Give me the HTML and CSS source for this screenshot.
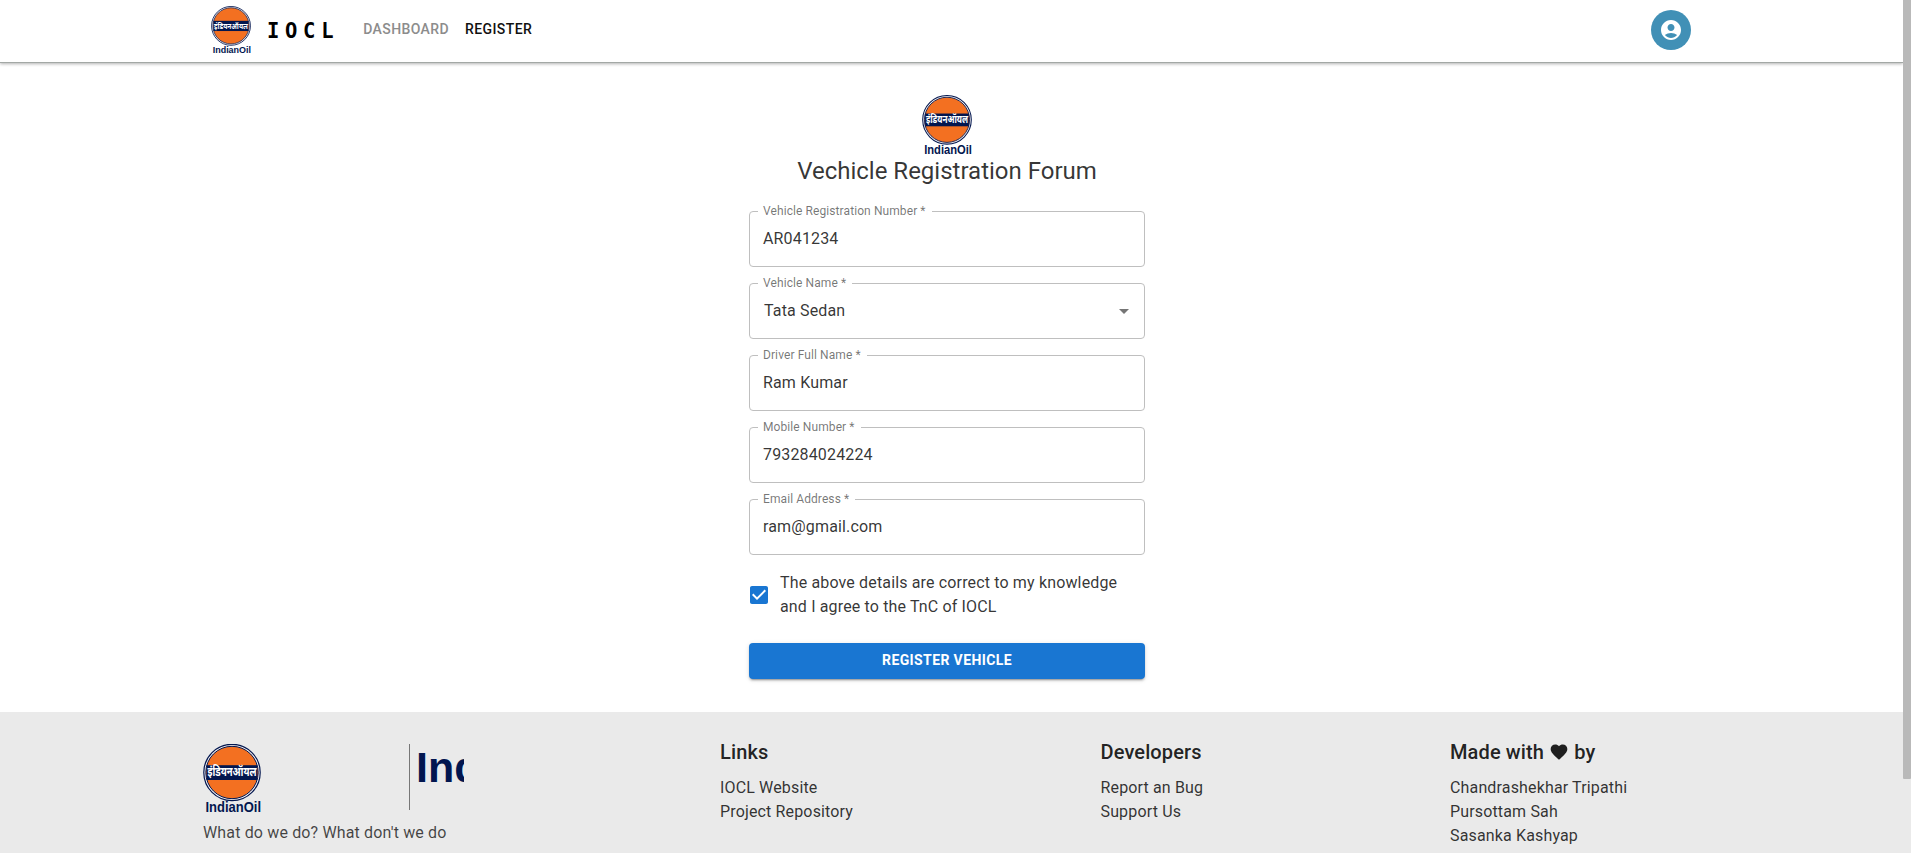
FILE: index.html
```html
<!DOCTYPE html>
<html lang="en">
<head>
<meta charset="utf-8">
<title>IOCL - Register</title>
<link rel="stylesheet" href="styles.css">
</head>
<body>
<svg class="defs" aria-hidden="true">
  <symbol id="emblem" viewBox="0 0 58 69">
    <circle cx="29" cy="28.5" r="28.2" fill="#f3f1f2" stroke="#02164f" stroke-width="1.2"/>
    <circle cx="29" cy="28.5" r="26.2" fill="#f37021" stroke="#02164f" stroke-width="1"/>
    <rect x="3.6" y="21.2" width="50.8" height="14.8" fill="#02164f"/>
    <text class="emblem-hindi" x="29" y="32.4" text-anchor="middle" textLength="49" lengthAdjust="spacingAndGlyphs">इंडियनऑयल</text>
    <text class="emblem-name" x="2.5" y="68" textLength="55.5" lengthAdjust="spacingAndGlyphs">IndianOil</text>
  </symbol>
</svg>

<header class="appbar">
  <div class="toolbar">
    <svg class="logo logo-small"><use href="#emblem"/></svg>
    <span class="brand">IOCL</span>
    <nav class="nav">
      <a class="nav-link muted">DASHBOARD</a>
      <a class="nav-link">REGISTER</a>
    </nav>
    <div class="avatar">
      <svg width="24" height="24" viewBox="0 0 24 24"><path fill="#fff" d="M12 2C6.48 2 2 6.48 2 12s4.480 10 10 10 10-4.480 10-10S17.520 2 12 2zm0 4c1.930 0 3.500 1.570 3.500 3.500S13.930 13 12 13s-3.500-1.570-3.500-3.500S10.070 6 12 6zm0 14c-2.030 0-4.430-.82-6.140-2.880C7.550 15.800 9.680 15 12 15s4.450.8 6.140 2.120C16.430 19.180 14.030 20 12 20z"/></svg>
    </div>
  </div>
</header>

<main class="main">
  <svg class="logo logo-medium"><use href="#emblem"/></svg>
  <h1 class="title">Vechicle Registration Forum</h1>
  <form class="form">
    <fieldset class="field"><legend>Vehicle Registration Number *</legend><div class="value">AR041234</div></fieldset>
    <fieldset class="field"><legend>Vehicle Name *</legend><div class="value select">Tata Sedan
      <svg width="24" height="24" viewBox="0 0 24 24"><path fill="#757575" d="M7 10l5 5 5-5z"/></svg></div></fieldset>
    <fieldset class="field"><legend>Driver Full Name *</legend><div class="value">Ram Kumar</div></fieldset>
    <fieldset class="field"><legend>Mobile Number *</legend><div class="value">793284024224</div></fieldset>
    <fieldset class="field"><legend>Email Address *</legend><div class="value">ram@gmail.com</div></fieldset>
    <div class="agree">
      <svg width="24" height="24" viewBox="0 0 24 24"><path fill="#1976d2" d="M19 3H5c-1.110 0-2 .9-2 2v14c0 1.100.89 2 2 2h14c1.110 0 2-.9 2-2V5c0-1.100-.89-2-2-2zm-9 14l-5-5 1.410-1.410L10 14.170l7.590-7.590L19 8l-9 9z"/></svg>
      <span>The above details are correct to my knowledge and I agree to the TnC of IOCL</span>
    </div>
    <button class="submit" type="button">REGISTER VEHICLE</button>
  </form>
</main>

<footer class="footer">
  <section class="about">
    <div class="banner">
      <svg class="logo logo-large"><use href="#emblem"/></svg>
      <div class="wordmark">IndianOil</div>
    </div>
    <p>What do we do? What don't we do</p>
  </section>
  <section class="links">
    <h2>Links</h2>
    <a>IOCL Website</a>
    <a>Project Repository</a>
  </section>
  <section class="links">
    <h2>Developers</h2>
    <a>Report an Bug</a>
    <a>Support Us</a>
  </section>
  <section class="links">
    <h2>Made with <svg class="heart" viewBox="0 0 24 24"><path fill="currentColor" d="M12 21.350l-1.450-1.320C5.400 15.360 2 12.280 2 8.500 2 5.420 4.420 3 7.500 3c1.740 0 3.410.81 4.500 2.090C13.090 3.810 14.760 3 16.500 3 19.580 3 22 5.420 22 8.500c0 3.780-3.400 6.860-8.550 11.540L12 21.350z"/></svg> by</h2>
    <a>Chandrashekhar Tripathi</a>
    <a>Pursottam Sah</a>
    <a>Sasanka Kashyap</a>
  </section>
</footer>
<div class="scroll-thumb"></div>
</body>
</html>
```
FILE: styles.css
```css
* { box-sizing: border-box; }

body {
  margin: 0;
  height: 853px;
  padding-right: 8px;
  overflow: hidden;
  background: #fff;
  color: rgba(0, 0, 0, .8);
  font: 400 16px/24px Roboto, sans-serif;
  letter-spacing: .15px;
}

.defs { display: none; }
.logo { display: block; flex: none; }
.logo-small { width: 40px; height: 48px; }
.logo-medium { width: 50px; height: 60px; }
.logo-large { width: 58px; height: 69px; }

.emblem-hindi {
  font: 700 12.5px "Noto Sans Devanagari", "Noto Sans", sans-serif;
  letter-spacing: 0;
  fill: #fff;
}

.emblem-name {
  font: 700 13.8px "Liberation Sans", Arial, sans-serif;
  letter-spacing: 0;
  fill: #02164f;
}

.appbar {
  height: 63px;
  padding: 0 203px;
  border-bottom: 1px solid #a3a8a5;
  box-shadow: 0 1px 3px rgba(0, 0, 0, .3);
}

.toolbar {
  display: flex;
  align-items: center;
  height: 60px;
  padding: 0 9px 0 8px;
}

.brand {
  margin: 2px 0 0 16px;
  color: #000;
  font: 700 20.5px/32px "DejaVu Sans Mono", monospace;
  letter-spacing: 5.7px;
}

.nav {
  display: flex;
  gap: 16px;
  margin: -2px 0 0 24px;
}

.nav-link {
  color: #111;
  font-size: 14px;
  font-weight: 500;
  letter-spacing: .4px;
}

.nav-link.muted { color: #8c8c8c; }

.avatar {
  display: grid;
  place-items: center;
  width: 40px;
  height: 40px;
  margin-left: auto;
  border-radius: 50%;
  background: #4190b6;
}

.main {
  display: flex;
  flex-direction: column;
  align-items: center;
  height: 649px;
  padding: 32px 0 0;
}

.main .logo { margin-right: 9px; }

.title {
  margin: 0 9px 0 0;
  font-size: 24px;
  font-weight: 400;
  line-height: 32px;
  letter-spacing: 0;
}

.form {
  display: flex;
  flex-direction: column;
  gap: 10px;
  width: 396px;
  margin: 18px 9px 0 0;
}

.field {
  min-width: 0;
  height: 62px;
  margin: 0;
  padding: 0 13px;
  border: 1px solid #bfbfbf;
  border-radius: 4px;
}

.field legend {
  margin-left: -5px;
  padding: 0 6px 0 5px;
  color: rgba(0, 0, 0, .55);
  font-size: 12px;
  line-height: 12px;
  letter-spacing: .09px;
}

.value {
  display: flex;
  align-items: center;
  height: 44px;
}

.select {
  justify-content: space-between;
  padding-left: 1px;
  margin-right: -5px;
}

.agree {
  display: flex;
  align-items: center;
  gap: 9px;
  height: 48px;
  margin: 6px 0 0 -2px;
}

.agree svg { flex: none; }

.submit {
  height: 36px;
  margin-top: 14px;
  padding: 0 0 2px;
  border: 0;
  border-radius: 4px;
  background: #1976d2;
  box-shadow: 0 3px 1px -2px rgba(0, 0, 0, .2), 0 2px 2px rgba(0, 0, 0, .14), 0 1px 5px rgba(0, 0, 0, .12);
  color: #fff;
  font: 700 14px/24px Roboto, sans-serif;
  letter-spacing: .38px;
}

.footer {
  display: grid;
  grid-template-columns: 517px 380.500px 349.500px 1fr;
  height: 141px;
  margin-right: -8px;
  padding: 32px 0 0 203px;
  background: #eaeaea;
}

.banner {
  display: flex;
  justify-content: space-between;
  width: 261px;
  height: 69px;
  overflow: hidden;
}

.wordmark {
  width: 55px;
  height: 66px;
  padding-left: 6px;
  overflow: hidden;
  border-left: 1px solid #777;
  color: #02164f;
  font: 700 43px/46px "Liberation Sans", Arial, sans-serif;
  letter-spacing: 0;
}

.about p {
  margin: 8px 0 0;
  color: rgba(0, 0, 0, .72);
}

.links { display: flex; flex-direction: column; }

.links h2 {
  margin: -8px 0 8px;
  color: rgba(0, 0, 0, .87);
  font-size: 20px;
  font-weight: 500;
  line-height: 32px;
  letter-spacing: .12px;
}

.heart {
  width: 20px;
  height: 20px;
  vertical-align: -3px;
}

.scroll-thumb {
  position: absolute;
  top: 0;
  right: 0;
  width: 8px;
  height: 779px;
  background: #b9b9b9;
  border-radius: 0 0 1px 1px;
}
```
